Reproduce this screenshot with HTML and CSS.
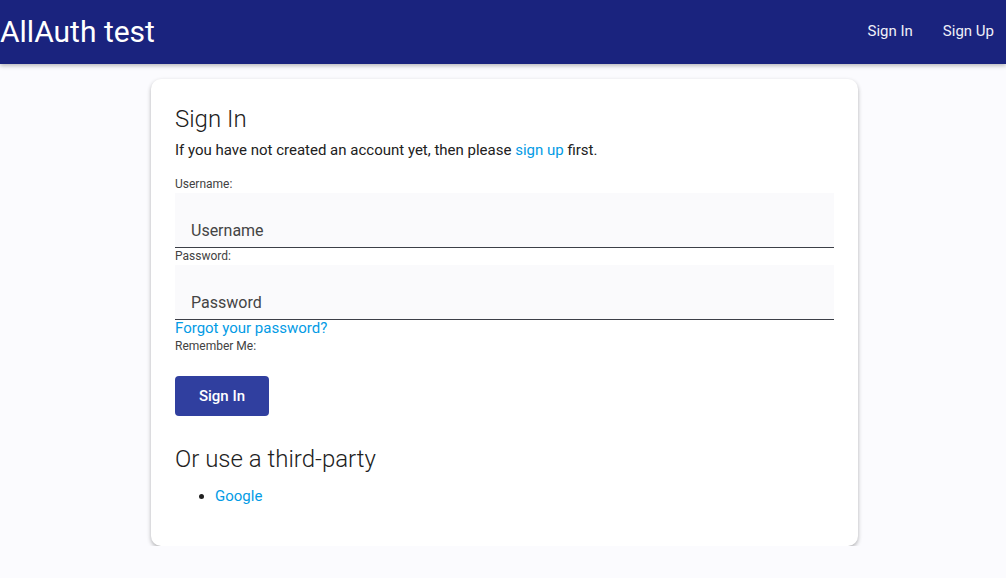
FILE: index.html
```html
<!DOCTYPE html>
<html lang="en">
<head>
<meta charset="utf-8">
<title>AllAuth test</title>
<link rel="stylesheet" href="styles.css">
</head>
<body>
<header class="topbar">
  <span class="brand">AllAuth test</span>
  <nav class="nav">
    <a class="nav-link" href="#">Sign In</a>
    <a class="nav-link" href="#">Sign Up</a>
  </nav>
</header>
<main class="main">
  <section class="card">
    <h1 class="title">Sign In</h1>
    <p class="lead">If you have not created an account yet, then please <a class="link" href="#">sign up</a> first.</p>
    <form class="form">
      <label class="label">Username:</label>
      <div class="field"><input class="input" type="text" placeholder="Username"></div>
      <label class="label label-next">Password:</label>
      <div class="field"><input class="input" type="password" placeholder="Password"></div>
      <a class="link forgot" href="#">Forgot your password?</a>
      <label class="label label-remember">Remember Me:</label>
      <div class="actions"><button class="btn" type="button">Sign In</button></div>
    </form>
    <h2 class="subtitle">Or use a third-party</h2>
    <ul class="providers">
      <li><a class="link" href="#">Google</a></li>
    </ul>
  </section>
</main>
</body>
</html>
```
FILE: styles.css
```css
* { box-sizing: border-box; }
html, body { margin: 0; padding: 0; }
body {
  background: #fbfbfe;
  font-family: Roboto, "Liberation Sans", sans-serif;
  color: #212121;
}
.topbar {
  height: 64px;
  background: #1a237e;
  display: flex;
  align-items: center;
  justify-content: space-between;
  padding-bottom: 2px;
  box-shadow: 0 2px 4px rgba(0,0,0,0.25);
}
.brand {
  color: #fff;
  font-size: 30px;
  font-weight: 400;
}
.nav { display: flex; gap: 30px; padding-right: 12px; }
.nav-link {
  color: #f0f0f8;
  text-decoration: none;
  font-size: 15px;
}
.main { padding-top: 15px; }
.card {
  width: 707px;
  margin: 0 0 0 calc(50% - 352px);
  background: #fff;
  border-radius: 10px;
  box-shadow: 0 2px 4px rgba(0,0,0,0.3);
  padding: 24px 24px 39px;
}
.title {
  margin: 0;
  font-size: 24px;
  font-weight: 300;
  line-height: 32px;
}
.lead {
  margin: 4px 0 0;
  font-size: 15px;
  line-height: 22px;
}
.link { color: #039be5; text-decoration: none; }
.form { display: flex; flex-direction: column; margin-top: 16px; }
.label {
  font-size: 12px;
  line-height: 14px;
  color: #424242;
}
.label-next { margin-top: 1px; }
.label-remember { margin-top: 3px; }
.field {
  margin-top: 2px;
  height: 55px;
  background: #fafafc;
  border-bottom: 1px solid #3c3f47;
}
.input {
  width: 100%;
  height: 100%;
  border: 0;
  background: transparent;
  padding: 20px 16px 0;
  font-family: Roboto, "Liberation Sans", sans-serif;
  font-size: 16px;
  outline: none;
}
.input::placeholder { color: #444; opacity: 1; }
.forgot { font-size: 15px; line-height: 16px; align-self: flex-start; }
.actions { margin-top: 23px; }
.btn {
  width: 94px;
  height: 40px;
  border: 0;
  border-radius: 4px;
  background: #303f9f;
  color: #fff;
  font-family: Roboto, "Liberation Sans", sans-serif;
  font-size: 15px;
  font-weight: 500;
}
.subtitle {
  margin: 27px 0 0;
  font-size: 24px;
  font-weight: 300;
  line-height: 32px;
}
.providers {
  margin: 10px 0 0;
  padding-left: 40px;
  font-size: 15px;
  line-height: 22px;
}
```
